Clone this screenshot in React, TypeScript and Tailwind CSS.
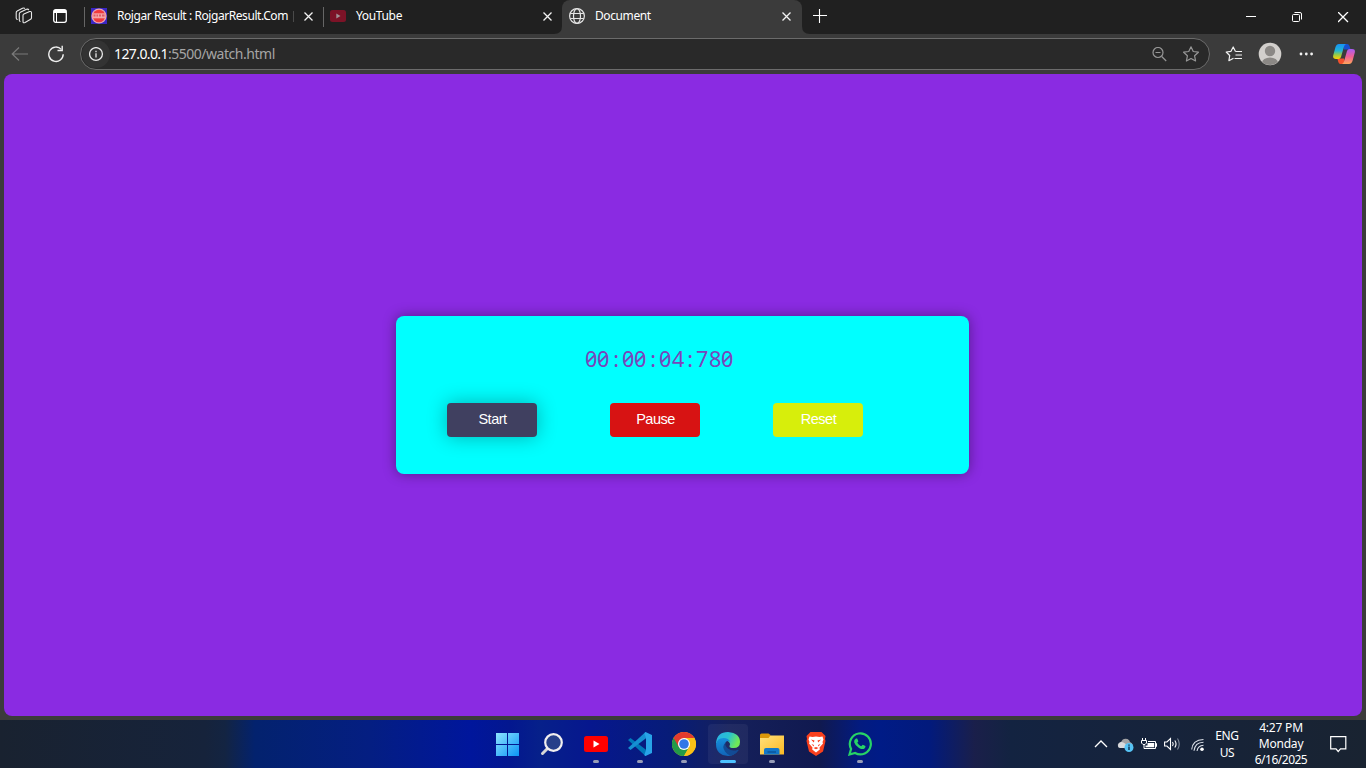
import React from "react";

type P = { className?: string };
const UI = "font-['Noto_Sans','Open_Sans',sans-serif]";

const Close = ({ className = "" }: P) => (
  <svg className={className} width="9" height="9" viewBox="0 0 9 9" fill="none" stroke="#f2f2f2" strokeWidth="1.3"><path d="M.5.5l8 8M8.5.5l-8 8" /></svg>
);

const Workspaces = () => (
  <svg width="18" height="18" viewBox="0 0 18 18" fill="none" stroke="#e8e8e8" strokeWidth="1.1" strokeLinejoin="round">
    <path d="M8 8.500q0-1 .9-1.400l5.700-2.500q1.900-.6 1.900 1.200v5q0 1-.9 1.500l-5.500 3.200q-2.100 1-2.100-1.100z" />
    <path d="M5.500 14.500q-1.200-.2-1.200-1.600V7q0-1.200 1-1.700l6.200-3q1.800-.6 2.300.9" />
    <path d="M2.700 12.500q-1.500-.2-1.500-1.600V5.800q0-1.200 1-1.700L7.500 1.300q1.600-.7 2.500.2" />
  </svg>
);
const TabActions = () => (
  <svg width="14" height="14" viewBox="0 0 14 14"><rect x=".7" y=".7" width="12.600" height="12.600" rx="2" fill="none" stroke="#fff" strokeWidth="1.300" /><path d="M1 1h12v3H1z" fill="#fff" /><path d="M3.500 4v9" stroke="#fff" /></svg>
);
const Globe = () => (
  <svg width="17" height="17" viewBox="0 0 17 17" fill="none" stroke="#e4e4e4" strokeWidth="1.200"><circle cx="8" cy="8" r="7.400" /><ellipse cx="8" cy="8" rx="3.500" ry="7.400" /><path d="M1.300 5.500h13.400M1.300 10.500h13.400" /></svg>
);
const RojgarIcon = () => (
  <svg width="16" height="16" viewBox="0 0 16 16"><path d="M0 0h16v16H0z" fill="#3926c4" /><circle cx="8" cy="8" r="7.600" fill="#e6a5b6" /><circle cx="8" cy="8" r="6.300" fill="#f0393c" /><path d="M1.500 5.300h13v5h-13z" fill="#f4a5a5" /><path d="M2.500 6.500h2v2h-2zM5.500 6.500H7v2H5.500zM8 6.500h2v2H8zM11 6.500h2.500v2H11z" fill="#e05a68" /></svg>
);
const Refresh = () => (
  <svg width="17" height="18" viewBox="0 0 17 18" fill="none" stroke="#f0f0f0" strokeWidth="1.400"><path d="M13.300 4.400A7.200 7.200 0 1 0 15.200 9.300" /><path d="M14.200.8v4.700H9.500" /></svg>
);

const Cover = ({ side }: { side: "l" | "r" }) => (
  <svg width="8" height="8" viewBox="0 0 8 8" className="self-end shrink-0"><path d={side === "l" ? "M8 0v8H0Q8 8 8 0z" : "M0 0v8h8Q0 8 0 0z"} fill="#3b3b3b" /></svg>
);

function TitleBar() {
  return (
    <div className="flex h-[34px] shrink-0 bg-[#202020]">
      <div className="flex w-[84px] items-start pl-[15px] pt-[7px]"><Workspaces /><div className="ml-5 mt-[2px]"><TabActions /></div></div>
      <div className="mt-[7px] h-[20px] w-px bg-[#666]" />
      <div className="flex w-[238px] items-center pb-[2px] pl-[6px]">
        <RojgarIcon />
        <span className="ml-[10px] w-[172px] whitespace-nowrap text-[12px] tracking-[-0.43px]">Rojgar Result : RojgarResult.Com</span>
        <span className="h-[11px] w-px bg-[#4a4a4a] ml-[4px]" />
        <Close className="ml-[10px]" />
      </div>
      <div className="mt-[7px] h-[20px] w-px bg-[#666]" />
      <div className="flex w-[230px] items-center pb-[2px] pl-[6px]">
        <svg width="16" height="12" viewBox="0 0 16 12"><rect width="16" height="12" rx="2.500" fill="#7c1327" /><path d="M6.300 3.600v4.800L10.500 6z" fill="#a09295" /></svg>
        <span className="ml-[10px] flex-1 text-[12px] tracking-[-0.35px]">YouTube</span>
        <Close className="mr-[2px]" />
      </div>
      <Cover side="l" />
      <div className="flex w-[240px] items-center rounded-t-lg bg-[#3b3b3b] pb-[2px] pl-[7px]">
        <Globe />
        <span className="ml-[9px] flex-1 text-[12px] tracking-[-0.4px]">Document</span>
        <Close className="mr-[11px]" />
      </div>
      <Cover side="r" />
      <svg width="14" height="14" viewBox="0 0 14 14" className="ml-[3px] mt-[9px]" stroke="#fff" strokeWidth="1.100"><path d="M6.500 0v14M0 6.500h14" /></svg>
      <div className="ml-auto flex items-start pr-[17px]">
        <svg width="10" height="2" className="mr-[36px] mt-[16px]"><path d="M0 0h10v1H0z" fill="#fff" /></svg>
        <svg width="10" height="10" viewBox="0 0 10 10" className="mr-[36px] mt-[12px]" fill="none" stroke="#fff"><rect x=".5" y="2.500" width="7" height="7" rx="1" /><path d="M2.500.5H8Q9.500.5 9.500 2v5.500" /></svg>
        <svg width="11" height="11" viewBox="0 0 11 11" className="mt-[12px]" stroke="#fff" strokeWidth="1.300"><path d="M0 0l10 10M10 0L0 10" /></svg>
      </div>
    </div>
  );
}

function Copilot() {
  return (
    <svg width="22" height="20" viewBox="0 0 22 20">
      <defs>
        <linearGradient id="cpa" x1="0" y1="0" x2="0" y2="1"><stop stopColor="#1692f5" /><stop offset=".45" stopColor="#22b5d4" /><stop offset=".7" stopColor="#8fc94e" /><stop offset="1" stopColor="#ffd000" /></linearGradient>
        <linearGradient id="cpb" x1="0" y1="0" x2="0" y2="1"><stop stopColor="#a95cf5" /><stop offset=".5" stopColor="#ee5f95" /><stop offset="1" stopColor="#ffa45a" /></linearGradient>
      </defs>
      <path d="M10 0h4.200q1.600 0 2.300 2l1 3.500H11z" fill="#174ed0" />
      <path d="M12 20H7.500q-1.700 0-2.200-2l-1-3.500H11z" fill="#f3502d" />
      <path d="M6 0h7q-1.500.8-2 2.500L8 13q-.7 2-2.500 2H3Q-.5 15 .2 11.500L2.500 3Q3.500 0 6 0z" fill="url(#cpa)" />
      <path d="M16 20H9q1.500-.8 2-2.500L14 7q.7-2 2.500-2H19q3.500 0 2.800 3.500L19.500 17q-1 3-3.500 3z" fill="url(#cpb)" />
    </svg>
  );
}

function AddressBar() {
  return (
    <div className="flex h-10 shrink-0 items-center bg-[#3b3b3b]">
      <svg width="17" height="15" viewBox="0 0 17 15" className="ml-[11px]" fill="none" stroke="#7a7a7a" strokeWidth="1.200"><path d="M17 7H1.500M8 .5L1.200 7 8 13.500" /></svg>
      <div className="ml-5"><Refresh /></div>
      <div className="ml-[15px] flex h-8 w-[1130px] items-center rounded-full border border-[#6b6b6b] bg-[#292929] pl-[1px] pr-[10px]">
        <span className="flex h-7 w-7 items-center justify-center rounded-full bg-[#333]">
          <svg width="15" height="15" viewBox="0 0 15 15" fill="none" stroke="#e8e8e8" strokeWidth="1.300"><circle cx="7" cy="7" r="6.400" /><path d="M7 6.300V10.500M7 3.700v1.500" /></svg>
        </span>
        <span className="ml-[4px] whitespace-nowrap text-[14px] leading-5 tracking-[-0.6px] text-[#a5a5a5]"><span className="text-white">127.0.0.1</span><span className="tracking-[-0.47px]">:5500/watch.html</span></span>
        <svg width="15" height="15" viewBox="0 0 15 15" className="ml-auto" fill="none" stroke="#969696" strokeWidth="1.200"><circle cx="6" cy="5.500" r="5" /><path d="M9.700 9.500l4.500 4.500M3.500 5.500h5" /></svg>
        <svg width="17" height="17" viewBox="0 0 17 17" className="ml-[15px]" fill="none" stroke="#969696" strokeWidth="1.200" strokeLinejoin="round"><path d="M9 .8l2.250 4.700 5.150.7-3.800 3.600 1 5.200L9 12.500 4.400 15l1-5.200-3.800-3.600 5.150-.7z" /></svg>
      </div>
      <svg width="18" height="17" viewBox="0 0 18 17" className="ml-[15px]" fill="none" stroke="#f2f2f2" strokeWidth="1.200" strokeLinejoin="round"><path d="M10.500 5.500L8.200 1 6 5.300 1.200 6l3.500 3.500L3.900 14.700 8.500 12.300M10.500 5.500H17M10.500 9H17M9.500 12.500H17" /></svg>
      <svg width="24" height="24" viewBox="0 0 24 24" className="ml-[15px]"><defs><clipPath id="av"><circle cx="12" cy="12" r="11" /></clipPath></defs><circle cx="12" cy="12" r="11.300" fill="#d2cfcc" /><g clipPath="url(#av)" fill="#8b8885"><circle cx="12" cy="9" r="5.200" /><ellipse cx="12" cy="21" rx="8" ry="5.500" /></g></svg>
      <svg width="15" height="4" viewBox="0 0 15 4" className="ml-[17px]" fill="#f2f2f2"><circle cx="2" cy="2" r="1.400" /><circle cx="7.300" cy="2" r="1.400" /><circle cx="12.600" cy="2" r="1.400" /></svg>
      <div className="ml-[19px]"><Copilot /></div>
    </div>
  );
}

const btn = "flex h-[34px] w-[90px] items-center justify-center rounded-[4px] pb-px pl-[1px] font-['Liberation_Sans',Arial,sans-serif] text-[14.500px] tracking-[-0.5px] text-white";

function Stopwatch() {
  return (
    <div className="mt-[242px] mr-px flex h-[158px] w-[573px] flex-col rounded-lg bg-[#00ffff] shadow-[0_0_13px_rgba(0,0,0,0.4)]">
      <div className="ml-[189px] mt-[29px] flex h-[28px] font-['Noto_Sans',sans-serif] text-[21px] leading-[28px] text-[#7b45ba] [font-feature-settings:'zero','tnum']">
        {"00:00:04:780".split("").map((c, i) => <span key={i} className="w-[12.370px] scale-x-[1.03] text-center">{c}</span>)}
      </div>
      <div className="ml-[51px] mt-[30px] flex gap-[73px]">
        <button className={`${btn} bg-[#404060] shadow-[0_0_20px_rgba(0,0,0,0.3)]`}>Start</button>
        <button className={`${btn} bg-[#d71313]`}>Pause</button>
        <button className={`${btn} bg-[#d7ee0b]`}>Reset</button>
      </div>
    </div>
  );
}

const Windows = () => (
  <svg width="24" height="24" viewBox="0 0 24 24"><defs><linearGradient id="wg" x1="0" y1="0" x2="1" y2="1"><stop stopColor="#8ee3ff" /><stop offset="1" stopColor="#0a94f5" /></linearGradient></defs><path d="M0 1h11v11H0zM12 1h11v11H12zM0 13h11v11H0zM12 13h11v11H12z" fill="url(#wg)" /></svg>
);
const Search = () => (
  <svg width="24" height="24" viewBox="0 0 24 24" fill="none"><path d="M8 16L2.500 21.500" stroke="#d7d7d7" strokeWidth="3" strokeLinecap="round" /><circle cx="13.500" cy="10.500" r="8.300" fill="#263f8a" stroke="#f1eff0" strokeWidth="2.200" /></svg>
);
const Yt = () => (
  <svg width="24" height="24" viewBox="0 0 24 24"><rect y="4" width="24" height="16" rx="2.500" fill="#f00" /><path d="M9.500 8.500v7L15.500 12z" fill="#fff" /></svg>
);
const Code = () => (
  <svg width="24" height="24" viewBox="0 0 24 24"><path d="M0 8l2.500-2L19 18.500 17.500 24z" fill="#0078ba" /><path d="M0 16l2.500 2L19 5.500 17.500 0z" fill="#168fd2" /><path d="M17.500 0L24 3v18l-6.500 3q-1 0-1-1.500l1.500-4.500V6l-1.500-4q0-1.500 1-2z" fill="#28a4e8" /></svg>
);
const Chrome = () => (
  <svg width="24" height="24" viewBox="0 0 24 24"><circle cx="12" cy="12" r="12" fill="#fbc116" /><path d="M12 12L1.600 6A12 12 0 0 0 12 24l5.200-9z" fill="#229b48" /><path d="M1.600 6A12 12 0 0 1 22.400 6H12v6l-5.200 3z" fill="#e33b2e" /><path d="M12 6h10.400A12 12 0 0 1 12 24l5.200-9z" fill="#fbc116" /><circle cx="12" cy="12" r="6" fill="#fff" /><circle cx="12" cy="12" r="4.800" fill="#3177e7" /></svg>
);
const Edge = () => (
  <svg width="24" height="24" viewBox="0 0 24 24">
    <defs><linearGradient id="eg" x1="0" y1="0" x2="1" y2=".35"><stop stopColor="#2cafe6" /><stop offset=".55" stopColor="#28c1d1" /><stop offset="1" stopColor="#70e856" /></linearGradient><linearGradient id="eb" x1="0" y1="0" x2="0" y2="1"><stop stopColor="#168fdd" /><stop offset="1" stopColor="#1164b7" /></linearGradient></defs>
    <path d="M0 11Q1 0 12 0q12 1 12 10 0 6-6.500 6-4.500 0-4-2 1.500-2-.5-4-4-4-9-1.500Q1 9.500 0 12z" fill="url(#eg)" />
    <path d="M0 12Q1 6 7.500 6q5 0 7 4-3-2-5 .5-2 3.500 1.500 7.500 4 4 10 1.500Q17 24 12 24 0 23 0 12z" fill="url(#eb)" />
    <path d="M9.500 10.500Q5.500 14 9 19.500q2 3 5.500 4.200 4.500-.7 8-5.200.5-1-.6-.8-5.900 2.300-9.900-1.200-3.500-3-2.500-6z" fill="#124b94" />
  </svg>
);
const Folder = () => (
  <svg width="24" height="24" viewBox="0 0 24 24"><defs><linearGradient id="fg" x1="0" y1="0" x2="1" y2="1"><stop stopColor="#ffe17c" /><stop offset="1" stopColor="#fbb923" /></linearGradient></defs><path d="M0 3q0-1.500 1.500-1.500h7L10.500 3v7H0z" fill="#dc9709" /><path d="M0 6h8.500l2-2.500H24v19H0z" fill="url(#fg)" /><path d="M4 18q0-2 2-2h11.500q2 0 2 2v4.500H4z" fill="#1277c9" /><path d="M7.500 19h8.500v2H7.500z" fill="#0b5da7" /></svg>
);
const Brave = () => (
  <svg width="24" height="24" viewBox="0 0 24 24"><path d="M6.500 0h11L20 2.500 21.500 4l-.5 3 .5 2-2.500 10.500L12 24l-7-4.500L2.500 9 3 7l-.5-3L4 2.500z" fill="#f9401d" /><path d="M5.500 4.500l3 .5L12 4.500l3.500.5 3-.5 1 3-1 2.500.5 1.500-3.500 4 .3 2-3.800 3-3.800-3 .3-2L5 11.500 5.500 10l-1-2.500z" fill="#fff" /><path d="M7 7.500l3.500 1-.7 2zM17 7.500l-3.500 1 .7 2zM7.500 12l2.500 1-.5 1.500zM16.500 12l-2.500 1 .5 1.500zM9.500 16l2.500-1 2.500 1-2.500 1.300z" fill="#f9401d" /></svg>
);
const Whatsapp = () => (
  <svg width="24" height="24" viewBox="0 0 24 24" fill="none"><path d="M1.500 22.500l1.600-5.600A10.500 10.500 0 1 1 7.100 21z" stroke="#27d366" strokeWidth="2.200" /><path d="M8 6.500h1.200l1.200 2.800-1.100 1.500q1.300 2.400 3.900 3.500l1.500-1.500 2.800 1.300q.2 1.700-1.300 2.600-1.800 1.100-5.200-.8-4-2.300-4.900-5.600Q5.800 7.800 8 6.500z" fill="#27d366" /></svg>
);

const apps = [
  { Icon: Windows, on: false }, { Icon: Search, on: false }, { Icon: Yt, on: true }, { Icon: Code, on: true }, { Icon: Chrome, on: true },
  { Icon: Edge, on: true, active: true }, { Icon: Folder, on: true }, { Icon: Brave, on: false }, { Icon: Whatsapp, on: true },
];

function Tray() {
  return (
    <div className="flex h-full items-center text-center text-[12px] leading-4">
      <svg width="14" height="8" viewBox="0 0 14 8" fill="none" stroke="#fff" strokeWidth="1.300"><path d="M1 7l6-6 6 6" /></svg>
      <svg width="17" height="14" viewBox="0 0 17 14" className="ml-[9px] mt-[2px]"><path d="M2 9Q-.5 7 2 5q1-1 2-1 2-4.500 6.500-3 2 1 2.500 3 3 1 2.500 3.500Q15 9 12 9z" fill="#a2a2a5" /><path d="M1 8q0-3 3-4 2-.3 4 1.500L12 8v2H3Q1 10 1 8z" fill="#d9dadd" /><circle cx="12" cy="9.500" r="4.500" fill="#55c3f5" /><path d="M11.300 8.500h1.400V12h-1.400zM11.300 6.500h1.400v1.300h-1.400z" fill="#123052" /></svg>
      <svg width="17" height="13" viewBox="0 0 17 13" className="ml-[7px]" fill="none" stroke="#fff"><path d="M1.500 0v3M4.500 0v3M.5 2.500h5V5L4 6.500H2L.5 5zM3 6.500v4H14.500v-7H7M14.500 5.500h1v3h-1" /><path d="M6.500 5h6.700v4.200H4.500V7.500h2z" fill="#fff" stroke="none" /></svg>
      <svg width="17" height="14" viewBox="0 0 17 14" className="ml-[6px]" fill="none" stroke="#fff" strokeWidth="1.100"><path d="M.6 5h2.300L6.500 1.500v11L2.900 9H.6zM8.500 5q1.500 2 0 4M10.800 3.500q2.500 3.500 0 7" /><path d="M13.500 1.500q3.500 5.500 0 11" stroke="#7d8798" /></svg>
      <svg width="14" height="14" viewBox="0 0 14 14" className="ml-[10px] mt-[1px]" fill="none" stroke="#dce1e9" strokeWidth="1.100"><path d="M.7 11.500Q1.500 2 12.500 1.500M3 12.800Q4 4.500 12.500 4.300M6 13Q7 7.700 12.500 7.300" /><circle cx="11" cy="11.200" r="1.800" fill="#fff" stroke="none" /></svg>
      <div className="ml-[10px] w-6 tracking-[-0.4px]">ENG<br /><span className="relative top-[1px]">US</span></div>
      <div className="ml-[12px] w-[60px] whitespace-nowrap tracking-[-0.2px]">4:27 PM<br />Monday<br /><span className="tracking-[-0.5px]">6/16/2025</span></div>
      <svg width="17" height="17" viewBox="0 0 17 17" className="ml-[19px] mr-[19px] mt-[1px]" fill="none" stroke="#fff" strokeWidth="1.200"><path d="M.7.7h15.100v12.100H10.500L8.200 15.500 6 12.800H.7z" /></svg>
    </div>
  );
}

export default function App() {
  return (
    <div className={`${UI} flex h-[768px] w-[1366px] flex-col overflow-hidden bg-[#3b3b3b] text-white`}>
      <TitleBar />
      <AddressBar />
      <main className="mx-1 mb-1 flex h-[642px] shrink-0 flex-col items-center rounded-lg bg-[#8a2be2]"><Stopwatch /></main>
      <footer className="grid h-12 shrink-0 grid-cols-[1fr_396px_1fr] bg-[linear-gradient(90deg,#192230_0px,#16233b_205px,#132442_225px,#03226e_255px,#041e82_370px,#00169c_470px,#03178f_510px,#06208a_540px,#06178e_590px,#071c78_670px,#15205b_730px,#10194f_820px,#031b80_860px,#001b86_880px,#021a7c_930px,#1a1f4a_975px,#132341_1010px,#16233b_1160px,#192331_1366px)]">
        <div />
        <div className="ml-px flex items-center">
          {apps.map(({ Icon, on, active }, i) => (
            <div key={i} className="flex h-12 w-11 shrink-0 justify-center pt-1">
              <div className={`flex h-10 w-10 flex-col items-center rounded pt-2 ${active ? "bg-white/5" : ""}`}>
                <Icon />
                {on && <span className={`mt-[4px] h-[3px] rounded-full ${active ? "w-4 bg-[#4cc2ff]" : "w-[6px] bg-[#979db8]"}`} />}
              </div>
            </div>
          ))}
        </div>
        <div className="flex justify-end"><Tray /></div>
      </footer>
    </div>
  );
}
